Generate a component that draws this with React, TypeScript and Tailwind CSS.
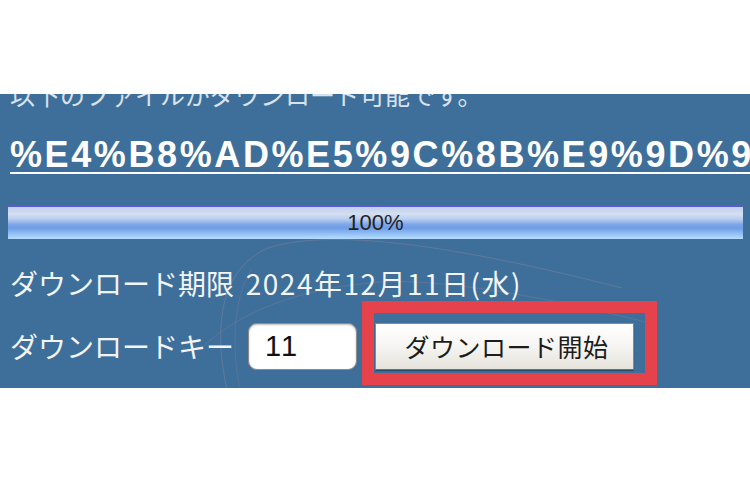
export default function App() {
  const jp = '[font-family:"Noto_Sans_CJK_JP","Noto_Sans",sans-serif]'
  return (
    <div className="w-[750px] h-[504px] bg-white overflow-hidden">
      <div className="relative mt-[94px] h-[294px] overflow-hidden bg-[#3e6f9b]">
        {/* faint watermark lines */}
        <svg
          className="absolute left-0 top-0 pointer-events-none"
          width="750"
          height="294"
          viewBox="0 94 750 294"
          fill="none"
        >
          <path d="M227 390 C214 330 218 270 268 248 C330 228 450 244 622 288" stroke="#7d7f99" strokeOpacity="0.55" strokeWidth="1" />
          <path d="M205 345 C240 312 300 288 380 282 C445 278 560 300 645 322" stroke="#7d7f99" strokeOpacity="0.45" strokeWidth="1" />
          <path d="M240 390 C232 350 232 300 252 268" stroke="#7d7f99" strokeOpacity="0.35" strokeWidth="1" />
        </svg>

        <div className="relative pl-[10px]">
          <p className={`${jp} -mt-[12px] text-[25px] leading-[25px] text-[#d9e2ec] whitespace-nowrap`}>
            以下のファイルがダウンロード可能です。
          </p>

          <a className="mt-[30px] block whitespace-nowrap font-['Liberation_Sans',Arial,sans-serif] text-[36px] leading-[36px] font-bold tracking-[2.6px] text-white underline decoration-2 underline-offset-[5px]">
            %E4%B8%AD%E5%9C%8B%E9%9D%9
          </a>
        </div>

        <div className="relative mt-[32px] ml-[8px] flex h-[34px] w-[735px] items-center justify-center border-t-2 border-[#5a5cc8] bg-[linear-gradient(to_bottom,#c3cfec_0%,#d4dff2_22%,#b9cdee_38%,#7ca6e8_55%,#6f9de6_66%,#94c0f4_84%,#b6dcff_100%)]">
          <span className="font-['Liberation_Sans',Arial,sans-serif] text-[22px] leading-none text-[#222]">100%</span>
        </div>

        <div className="relative pl-[10px]">
          <p className={`${jp} mt-[24px] h-[40px] text-[28px] leading-[40px] text-[#f2f4f6] whitespace-nowrap`}>
            ダウンロード期限<span className="ml-[4px] tracking-[1.5px]"> 2024年12月11日(水)</span>
          </p>

          <div className="mt-[19px] flex h-[48px] items-center">
            <span className={`${jp} text-[28px] leading-none text-[#f2f4f6] whitespace-nowrap`}>ダウンロードキー</span>
            <div className="ml-[14px] flex h-[47px] w-[109px] items-center rounded-[9px] border-[1.5px] border-[#8c8c8c] bg-white pl-[16px] shadow-[inset_0_1px_2px_rgba(0,0,0,0.25)]">
              <span className="font-['Liberation_Sans',Arial,sans-serif] text-[29px] leading-none tracking-[2px] text-[#111]">11</span>
            </div>
            <div className="relative ml-[18px]">
              <button className={`${jp} flex h-[47px] w-[259px] items-center justify-center border border-[#8a8a8a] border-b-[#6e6e6e] bg-[linear-gradient(to_bottom,#ffffff_0%,#f7f6f3_45%,#e6e3dc_100%)] pl-[4px] text-[25px] leading-none tracking-[0.5px] text-[#1c1c1c] shadow-[0_1px_1px_rgba(0,0,0,0.3)]`}>
                ダウンロード開始
              </button>
              <div className="absolute -left-[13px] -top-[22px] h-[84px] w-[295px] border-[12px] border-[#e5424c] pointer-events-none" />
            </div>
          </div>
        </div>
      </div>
    </div>
  )
}
